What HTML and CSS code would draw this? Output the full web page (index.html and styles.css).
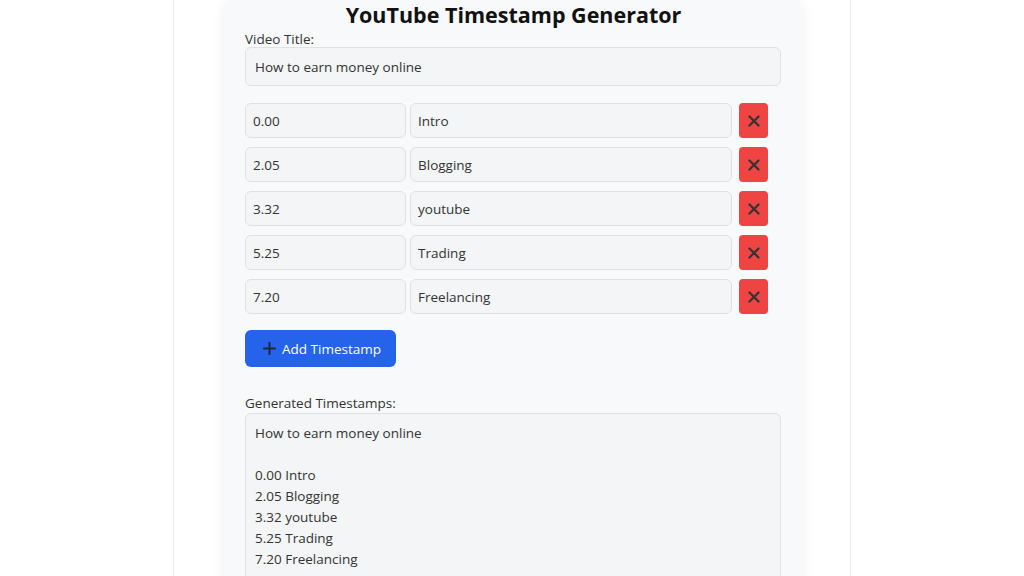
FILE: index.html
```html
<!DOCTYPE html>
<html lang="en">
<head>
<meta charset="utf-8">
<title>YouTube Timestamp Generator</title>
<link rel="stylesheet" href="styles.css">
</head>
<body>
<div class="page">
  <main class="card">
    <h1 class="title">YouTube Timestamp Generator</h1>
    <label class="label">Video Title:</label>
    <input class="field title-field" type="text" value="How to earn money online">

    <div class="rows">
      <div class="row">
        <input class="field time" type="text" value="0.00">
        <input class="field desc" type="text" value="Intro">
        <button class="del" aria-label="Remove"><svg viewBox="0 0 12 12" width="12" height="12"><path d="M1.5 1.5L10.5 10.5M10.5 1.5L1.5 10.5" stroke="#333" stroke-width="2.2" stroke-linecap="round"/></svg></button>
      </div>
      <div class="row">
        <input class="field time" type="text" value="2.05">
        <input class="field desc" type="text" value="Blogging">
        <button class="del" aria-label="Remove"><svg viewBox="0 0 12 12" width="12" height="12"><path d="M1.5 1.5L10.5 10.5M10.5 1.5L1.5 10.5" stroke="#333" stroke-width="2.2" stroke-linecap="round"/></svg></button>
      </div>
      <div class="row">
        <input class="field time" type="text" value="3.32">
        <input class="field desc" type="text" value="youtube">
        <button class="del" aria-label="Remove"><svg viewBox="0 0 12 12" width="12" height="12"><path d="M1.5 1.5L10.5 10.5M10.5 1.5L1.5 10.5" stroke="#333" stroke-width="2.2" stroke-linecap="round"/></svg></button>
      </div>
      <div class="row">
        <input class="field time" type="text" value="5.25">
        <input class="field desc" type="text" value="Trading">
        <button class="del" aria-label="Remove"><svg viewBox="0 0 12 12" width="12" height="12"><path d="M1.5 1.5L10.5 10.5M10.5 1.5L1.5 10.5" stroke="#333" stroke-width="2.2" stroke-linecap="round"/></svg></button>
      </div>
      <div class="row">
        <input class="field time" type="text" value="7.20">
        <input class="field desc" type="text" value="Freelancing">
        <button class="del" aria-label="Remove"><svg viewBox="0 0 12 12" width="12" height="12"><path d="M1.5 1.5L10.5 10.5M10.5 1.5L1.5 10.5" stroke="#333" stroke-width="2.2" stroke-linecap="round"/></svg></button>
      </div>
    </div>

    <button class="add"><svg viewBox="0 0 14 14" width="13" height="13"><path d="M7 1V13M1 7H13" stroke="#1f2937" stroke-width="2.2" stroke-linecap="round"/></svg><span>Add Timestamp</span></button>

    <label class="label gen-label">Generated Timestamps:</label>
    <div class="output">How to earn money online

0.00 Intro
2.05 Blogging
3.32 youtube
5.25 Trading
7.20 Freelancing</div>
  </main>
</div>
</body>
</html>
```

FILE: styles.css
```css
* { box-sizing: border-box; }
html, body { margin: 0; padding: 0; background: #ffffff; height: 100%; overflow: hidden; }
body { font-family: "Open Sans", "Noto Sans", sans-serif; color: #333; }

.page {
  width: 678px;
  margin: 0 auto 0 173px;
  height: 576px;
  border-left: 1px solid #ececec;
  border-right: 1px solid #ececec;
  padding: 4px 48px 0 50px;
}

.card {
  background: #f8f9fb;
  border-radius: 14px;
  box-shadow: 0 0 14px rgba(0, 0, 0, 0.07);
  padding: 0 20px 20px 21px;
  min-height: 620px;
}

.title {
  margin: -4px 0 0;
  text-align: center;
  font-size: 21.5px;
  line-height: 29px;
  font-weight: 700;
  color: #111;
}

.label {
  display: block;
  font-size: 13.5px;
  line-height: 18px;
  color: #333;
  margin-top: 1px;
}

.field {
  font-family: inherit;
  font-size: 13.5px;
  color: #333;
  background: #f4f5f7;
  border: 1px solid #dfe1e5;
  border-radius: 6px;
  outline: none;
}

.title-field {
  display: block;
  width: 536px;
  height: 39px;
  padding: 0 9px;
  margin-top: -1px;
}

.rows {
  display: flex;
  flex-direction: column;
  gap: 9px;
  margin-top: 17px;
}

.row {
  display: flex;
  align-items: center;
  gap: 4px;
}

.time { width: 161px; height: 35px; padding: 0 7px; }
.desc { width: 322px; height: 35px; padding: 0 7px; }

.del {
  width: 29px;
  height: 35px;
  margin-left: 3px;
  border: none;
  border-radius: 4px;
  background: #ef4444;
  display: flex;
  align-items: center;
  justify-content: center;
  padding: 0;
}

.add {
  display: flex;
  align-items: center;
  gap: 6px;
  margin-top: 16px;
  height: 37px;
  width: 151px;
  padding: 0 0 0 18px;
  border: none;
  border-radius: 6px;
  background: #2563eb;
  color: #ffffff;
  font-family: inherit;
  font-size: 13.5px;
}

.gen-label { margin-top: 27px; }

.output {
  margin-top: 1px;
  width: 536px;
  height: 200px;
  background: #f4f5f7;
  border: 1px solid #dfe1e5;
  border-radius: 6px;
  padding: 9px 9px;
  font-size: 13.5px;
  line-height: 21px;
  white-space: pre;
  color: #333;
}
```
